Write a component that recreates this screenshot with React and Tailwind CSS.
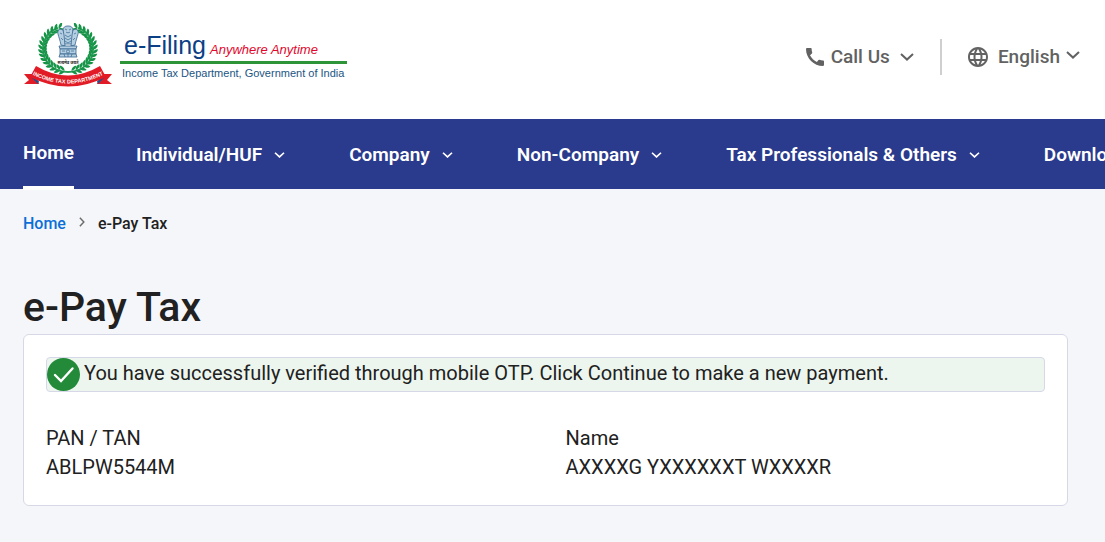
import { MdCall, MdLanguage } from "react-icons/md";

const navItems = [
  "Individual/HUF",
  "Company",
  "Non-Company",
  "Tax Professionals & Others",
  "Downloads",
];

const details = [
  { label: "PAN / TAN", value: "ABLPW5544M" },
  { label: "Name", value: "AXXXXG YXXXXXXT WXXXXR" },
];

// angles (degrees, clockwise from the bottom) of the leaves on one half of the wreath
const leaves = [8, 18, 28, 38, 48, 58, 68, 78, 88, 98, 108, 118, 128, 138, 148, 158];

function Chevron({ className, strokeWidth = 2 }) {
  return (
    <svg className={className} viewBox="0 0 14 8" fill="none" stroke="currentColor" aria-hidden="true">
      <path d="M1 1l6 5.6L13 1" strokeWidth={strokeWidth} />
    </svg>
  );
}

function HalfWreath() {
  return (
    <g>
      <path d="M0 23C14 23 25 13 25 0C25 -10 19 -18 10 -21" fill="none" stroke="#2a9d57" strokeWidth="2" />
      {leaves.map((deg) => {
        const rad = (deg * Math.PI) / 180;
        const x = Math.sin(rad) * 25;
        const y = Math.cos(rad) * 22;
        return (
          <g key={deg} transform={`translate(${x} ${y}) rotate(${-deg})`} fill="#159447">
            <path d="M0 0C1 -3 4 -4 6 -3.4C5 -1 3 0.4 0 0Z" transform="rotate(-8)" />
            <path d="M0 0C1 3 4 4.4 6 3.6C5 1 3 -0.4 0 0Z" transform="rotate(8)" />
          </g>
        );
      })}
    </g>
  );
}

function Emblem() {
  return (
    <svg className="w-[92px] h-[66px] shrink-0" viewBox="0 0 92 66" role="img" aria-label="Income Tax Department">
      <g transform="translate(46 26)">
        <HalfWreath />
        <g transform="scale(-1 1)">
          <HalfWreath />
        </g>
      </g>

      {/* lion capital */}
      <g fill="#b5cfe2" stroke="#36648f" strokeWidth="0.8">
        <path d="M41 8C41 4 43 3 46 3C49 3 51 4 51 8L52 13L51 21H41L40 13Z" />
        <path d="M41 7C37 5 35 8 36 11C37 15 38 17 39 22L43 23L42 12Z" />
        <path d="M51 7C55 5 57 8 56 11C55 15 54 17 53 22L49 23L50 12Z" />
        <path d="M37 23H55L54 26H38Z" />
        <path d="M38 26H54V31H38Z" />
        <path d="M38 31H54L55 34H37Z" />
      </g>
      <g fill="none" stroke="#36648f" strokeWidth="0.7">
        <path d="M43 6l2 1M49 6l-2 1M44 9c1 1 3 1 4 0M43 12l3 2 3-2M43 15l3 2 3-2M43 18l3 2 3-2M38 10l2 1M54 10l-2 1M39 15l2 2M53 15l-2 2" />
        <circle cx="46" cy="28.5" r="1.6" />
        <path d="M40 28h3M49 28h3M42 31l1 3M46 31v3M50 31l-1 3" />
      </g>
      <text x="46" y="41" textAnchor="middle" fontSize="4" fontWeight="700" fill="#222" fontFamily="'Noto Sans', sans-serif">
        सत्यमेव जयते
      </text>

      {/* ribbon */}
      <path d="M13 51L2 51L7 57L2 61L17 61Z" fill="#e11c26" />
      <path d="M79 51L90 51L85 57L90 61L75 61Z" fill="#e11c26" />
      <path d="M9 54L17 58L16 61Z" fill="#24508c" />
      <path d="M83 54L75 58L76 61Z" fill="#24508c" />
      <path d="M14 43Q46 62 78 43L84 54Q46 73 8 54Z" fill="#e11c26" />
      <path id="ribbon-line" d="M9 51Q46 70 83 51" fill="none" />
      <text fontSize="5.5" fontWeight="700" fill="#fff" fontFamily="'Liberation Sans', sans-serif">
        <textPath href="#ribbon-line" startOffset="50%" textAnchor="middle">
          INCOME TAX DEPARTMENT
        </textPath>
      </text>
    </svg>
  );
}

function Header() {
  return (
    <header className="bg-white flex items-start justify-between pl-[22px] pr-[25px] h-[119px]">
      <a href="#home" className="flex items-start gap-1.5 pt-[23px] no-underline font-['Liberation_Sans',sans-serif]">
        <Emblem />
        <span className="flex flex-col pt-2 min-w-[227px] whitespace-nowrap">
          <span className="flex items-baseline gap-1 px-1 h-[33px] border-b-3 border-[#2d9437] leading-7">
            <span className="text-[25px] text-[#0b3f86]">e-Filing</span>
            <span className="text-[13px] italic text-[#e2062c]">Anywhere Anytime</span>
          </span>
          <span className="text-[11px] leading-[18px] pl-0.5 text-[#1b5583]">
            Income Tax Department, Government of India
          </span>
        </span>
      </a>

      <div className="flex items-center pt-[39px] text-[19px] font-medium text-[#626262]">
        <button type="button" className="flex items-center">
          <MdCall className="size-6 mr-1" />
          Call Us
          <Chevron className="w-3.5 h-2 ml-2.5" />
        </button>
        <span className="w-0.5 h-9 bg-[#cfcfcf] ml-[26px] mr-6" />
        <button type="button" className="flex items-center">
          <MdLanguage className="size-6 mr-2" />
          English
          <Chevron className="w-3.5 h-2 ml-1.5 mb-1" />
        </button>
      </div>
    </header>
  );
}

function NavBar() {
  return (
    <nav className="bg-[#2a3a8c] h-[70px] pl-[23px] flex items-stretch overflow-x-clip text-[19px] font-semibold text-white whitespace-nowrap">
      <a href="#home" className="flex items-center pt-0.5 border-b-4 border-white mr-[62px] h-[71px]">
        Home
      </a>
      <div className="flex items-center gap-16 pt-0.5">
        {navItems.map((item) => (
          <button key={item} type="button" className="flex items-center shrink-0">
            {item}
            <Chevron className="w-[11px] h-1.5 ml-3" strokeWidth={2.2} />
          </button>
        ))}
      </div>
    </nav>
  );
}

export default function App() {
  return (
    <div className="min-h-screen bg-[#f5f6fa] text-[#212121] font-[Roboto,sans-serif]">
      <Header />
      <NavBar />

      <main className="pl-[23px] pr-[37px] pb-9">
        <nav aria-label="Breadcrumb" className="flex items-center pt-[23px] text-base font-medium">
          <a href="#home" className="text-[#0b6fd6]">
            Home
          </a>
          <Chevron className="w-2.5 h-1.5 mx-[11px] mb-1 -rotate-90 text-[#6b6b6b]" />
          <span>e-Pay Tax</span>
        </nav>

        <h1 className="mt-[46px] pb-0.5 text-[41px] leading-[50px] font-medium">e-Pay Tax</h1>

        <section className="bg-white border border-[#d6d8e8] rounded-md px-[22px] pt-[22px] pb-[23px]">
          <div role="status" className="flex items-center gap-1 bg-[#edf6ee] border border-[#d6d8e8] rounded-sm">
            <svg className="size-[33px] shrink-0" viewBox="0 0 33 33" aria-hidden="true">
              <circle cx="16.5" cy="16.5" r="16.5" fill="#228a38" />
              <path d="M8 17l6 6L25.5 10.5" fill="none" stroke="#fff" strokeWidth="2.4" strokeLinecap="round" />
            </svg>
            <p className="text-xl pb-1">
              You have successfully verified through mobile OTP. Click Continue to make a new payment.
            </p>
          </div>

          <dl className="grid grid-cols-2 gap-x-10 mt-8 text-xl leading-[29px]">
            {details.map((item) => (
              <div key={item.label}>
                <dt>{item.label}</dt>
                <dd>{item.value}</dd>
              </div>
            ))}
          </dl>
        </section>
      </main>
    </div>
  );
}
